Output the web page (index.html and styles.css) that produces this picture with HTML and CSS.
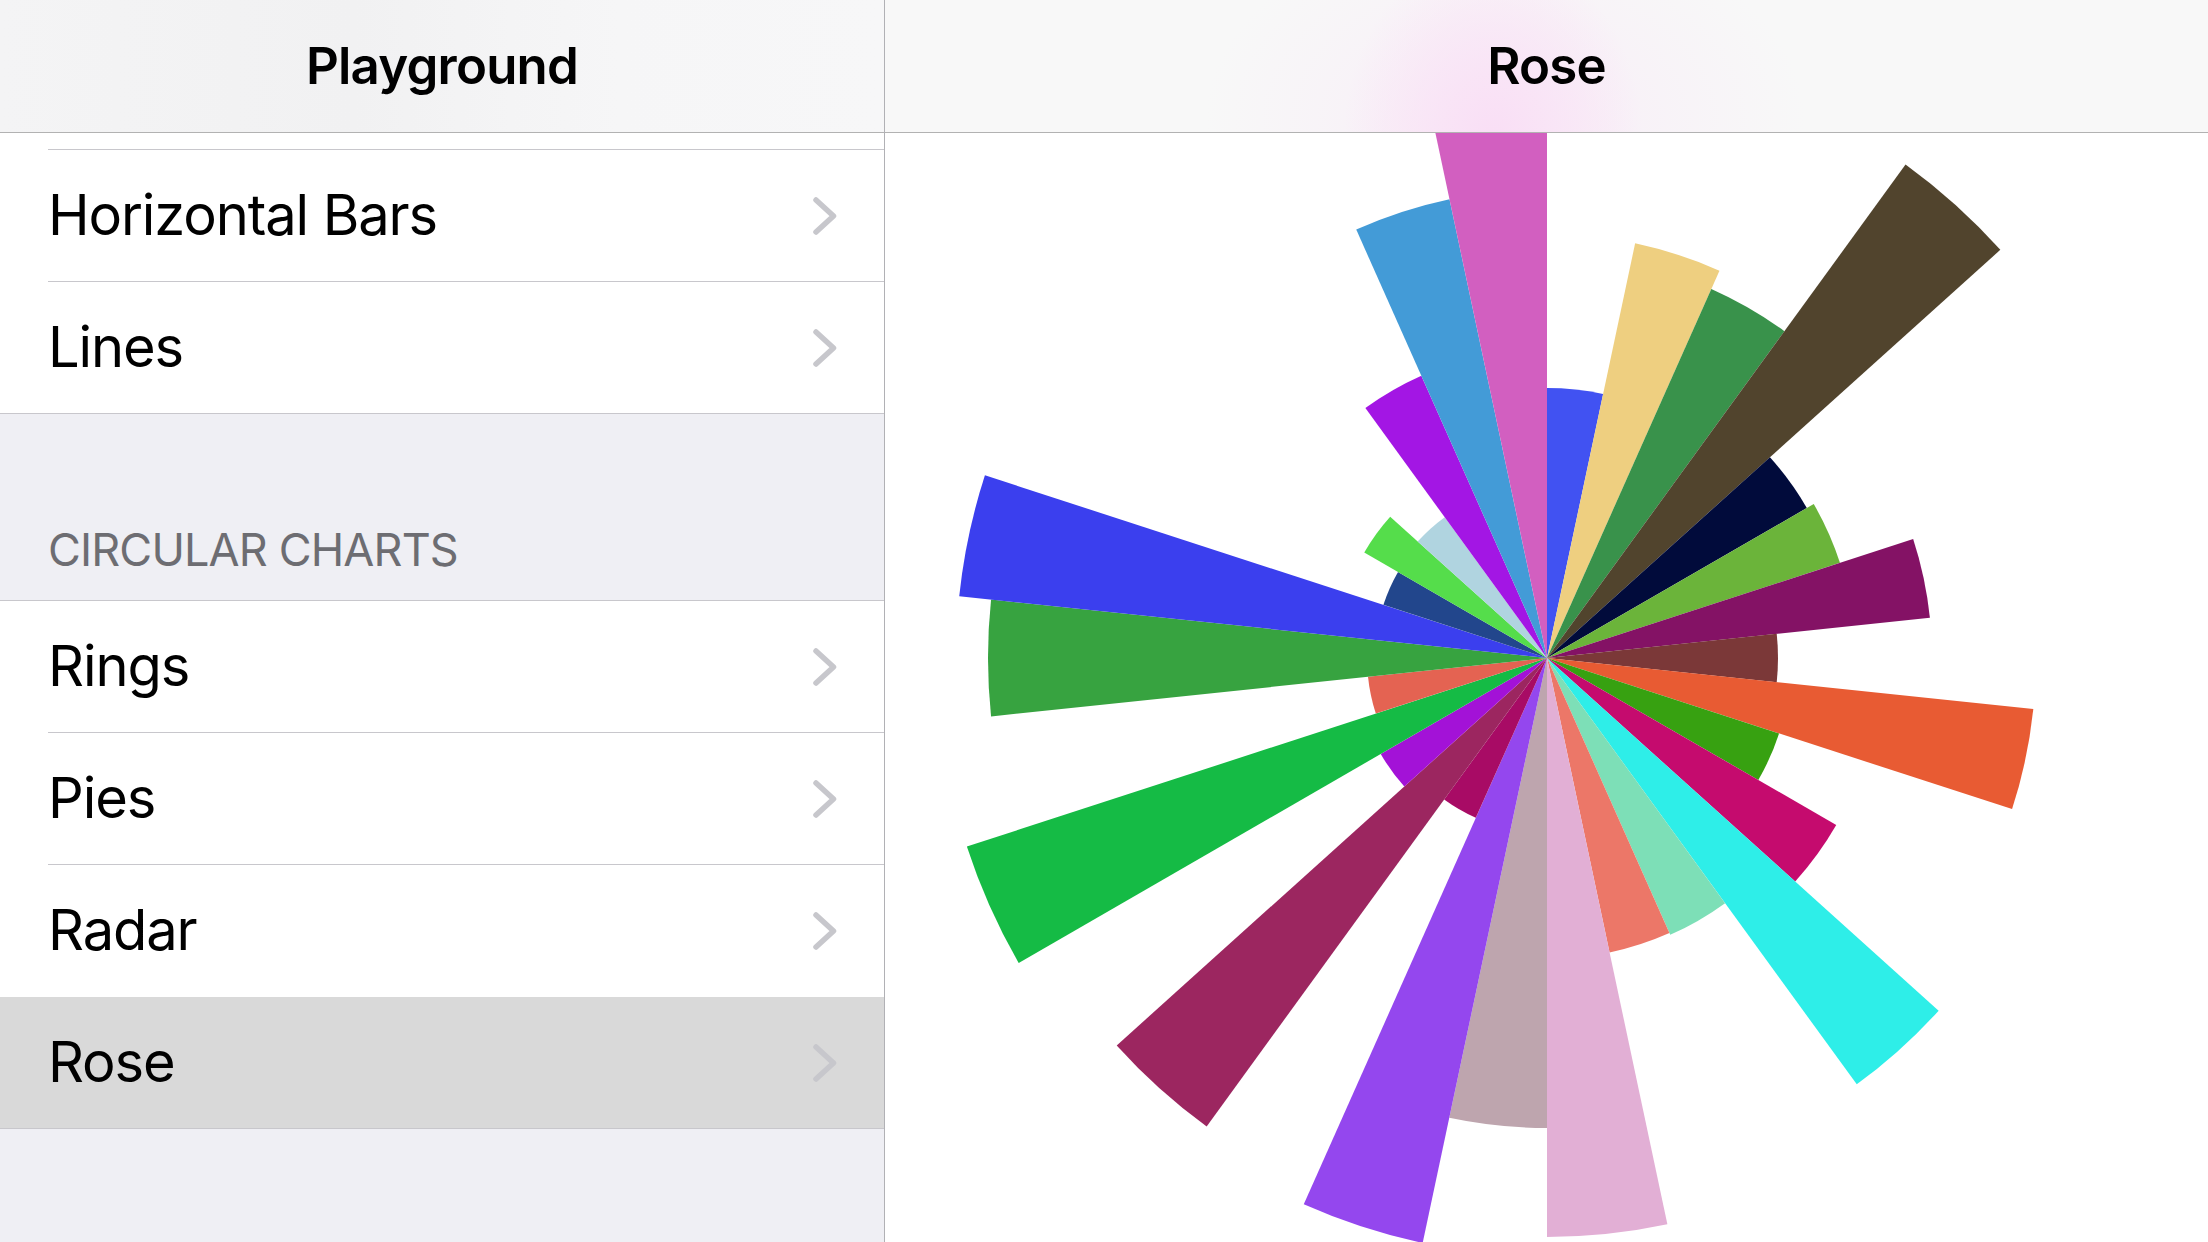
FILE: index.html
```html
<!DOCTYPE html>
<html lang="en">
<head>
<meta charset="utf-8">
<title>Rose</title>
<link rel="stylesheet" href="styles.css">
</head>
<body>
  <aside class="master">
    <header class="navbar navbar-master">
      <h1 class="navbar-title">Playground</h1>
    </header>
    <div class="list">
      <section class="group">
        <div class="row row-cut"><div class="row-body"></div></div>
        <div class="row"><div class="row-body"><span class="row-label">Horizontal Bars</span><svg class="chevron" viewBox="0 0 24 38"><polyline points="3,3 20.5,19 3,35"/></svg></div></div>
        <div class="row row-last"><div class="row-body"><span class="row-label">Lines</span><svg class="chevron" viewBox="0 0 24 38"><polyline points="3,3 20.5,19 3,35"/></svg></div></div>
      </section>
      <div class="section-header"><span class="section-title">CIRCULAR CHARTS</span></div>
      <section class="group group-bordered">
        <div class="row"><div class="row-body"><span class="row-label">Rings</span><svg class="chevron" viewBox="0 0 24 38"><polyline points="3,3 20.5,19 3,35"/></svg></div></div>
        <div class="row"><div class="row-body"><span class="row-label">Pies</span><svg class="chevron" viewBox="0 0 24 38"><polyline points="3,3 20.5,19 3,35"/></svg></div></div>
        <div class="row"><div class="row-body row-body-hidden"><span class="row-label">Radar</span><svg class="chevron" viewBox="0 0 24 38"><polyline points="3,3 20.5,19 3,35"/></svg></div></div>
        <div class="row row-last row-selected"><div class="row-body"><span class="row-label">Rose</span><svg class="chevron" viewBox="0 0 24 38"><polyline points="3,3 20.5,19 3,35"/></svg></div></div>
      </section>
    </div>
  </aside>
  <main class="detail">
    <header class="navbar navbar-detail">
      <h1 class="navbar-title">Rose</h1>
    </header>
    <div class="chart">
      <svg class="rose" viewBox="0 0 1323 1109" width="1323" height="1109"></svg>
    </div>
  </main>
  <script src="script.js"></script>
</body>
</html>
```

FILE: styles.css
```css
* { box-sizing: border-box; }
html, body { margin: 0; padding: 0; }
body {
  width: 2208px;
  height: 1242px;
  overflow: hidden;
  display: flex;
  background: #ffffff;
  font-family: Inter, "Noto Sans", "Liberation Sans", sans-serif;
  color: #000;
}
.master {
  width: 885px;
  flex: none;
  display: flex;
  flex-direction: column;
  background: #efeff4;
  border-right: 1px solid #b1b1b5;
}
.navbar {
  height: 133px;
  flex: none;
  display: flex;
  align-items: center;
  justify-content: center;
  border-bottom: 1px solid #b2b2b2;
  background: #f7f7f7;
}
.navbar-master {
  background: linear-gradient(90deg, #f4f4f5 0%, #f1f1f2 40%, #f6f6f7 70%, #f7f7f8 100%);
}
.navbar-detail {
  background:
    radial-gradient(ellipse 150px 190px at 608px 140px, rgba(249, 222, 245, 1) 0%, rgba(249, 228, 246, 0.85) 45%, rgba(248, 246, 248, 0) 100%),
    radial-gradient(ellipse 300px 200px at 620px 120px, rgba(248, 236, 247, 0.9) 0%, rgba(248, 247, 248, 0) 100%),
    #f8f8f8;
}
.navbar-title {
  margin: 0;
  font-size: 51px;
  font-weight: 600;
  letter-spacing: -0.8px;
  line-height: 1;
  padding-bottom: 1px;
}
.list { display: flex; flex-direction: column; }
.group { background: #fff; border-bottom: 1px solid #c8c7cc; }
.group-bordered { border-top: 1px solid #c8c7cc; }
.row { height: 132px; }
.row-last { height: 131px; }
.row-cut { height: 17px; }
.row-body {
  height: 100%;
  margin-left: 48px;
  padding-right: 47px;
  display: flex;
  align-items: center;
  justify-content: space-between;
  border-bottom: 1px solid #c8c7cc;
}
.row-last .row-body, .row-body-hidden { border-bottom: none; }
.row-body-hidden { height: 132px; }
.row-selected { background: #d9d9d9; }
.row-label {
  font-size: 56px;
  font-weight: 400;
  letter-spacing: -1.1px;
  line-height: 1;
  padding-bottom: 2px;
}
.chevron {
  width: 24px;
  height: 38px;
  flex: none;
  fill: none;
  stroke: #c7c7cc;
  stroke-width: 5.5;
  stroke-linecap: round;
  stroke-linejoin: round;
}
.section-header {
  height: 186px;
  display: flex;
  align-items: flex-end;
  padding-left: 48px;
  padding-bottom: 28px;
}
.section-title {
  font-size: 45px;
  line-height: 1;
  color: #6d6d72;
  letter-spacing: -0.85px;
}
.detail {
  flex: 1;
  display: flex;
  flex-direction: column;
  min-width: 0;
}
.chart {
  flex: 1;
  overflow: hidden;
  background: #fff;
}
.rose { display: block; }
```

FILE: script.js
```js
const sectors = [
  [270, '#4152f2'], [424, '#eecf80'], [404, '#39924b'], [610, '#51442d'],
  [300, '#010b3b'], [308, '#6bb43a'], [385, '#841265'], [231, '#7b3838'],
  [489, '#e85b33'], [244, '#37a111'], [334, '#c50b6e'], [527, '#2eeee8'],
  [303, '#7ddfb7'], [301, '#ec7768'], [579, '#e2afd5'], [470, '#bea5ae'],
  [598, '#9447ee'], [175, '#a80b65'], [579, '#9c2660'], [192, '#a312d7'],
  [610, '#15bb45'], [180, '#e46352'], [559, '#37a340'], [591, '#3b3fee'],
  [172, '#22468c'], [211, '#55dd4b'], [174, '#b0d4e0'], [309, '#a316e4'],
  [469, '#439bd7'], [620, '#d25fc0']
];
const svg = document.querySelector('.rose');
const cx = 662, cy = 525;
const step = 2 * Math.PI / sectors.length;
sectors.forEach(([r, color], i) => {
  const a1 = i * step, a2 = (i + 1) * step;
  const x1 = cx + r * Math.sin(a1), y1 = cy - r * Math.cos(a1);
  const x2 = cx + r * Math.sin(a2), y2 = cy - r * Math.cos(a2);
  const p = document.createElementNS('http://www.w3.org/2000/svg', 'path');
  p.setAttribute('d', `M${cx} ${cy}L${x1.toFixed(2)} ${y1.toFixed(2)}A${r} ${r} 0 0 1 ${x2.toFixed(2)} ${y2.toFixed(2)}Z`);
  p.setAttribute('fill', color);
  svg.appendChild(p);
});
```
